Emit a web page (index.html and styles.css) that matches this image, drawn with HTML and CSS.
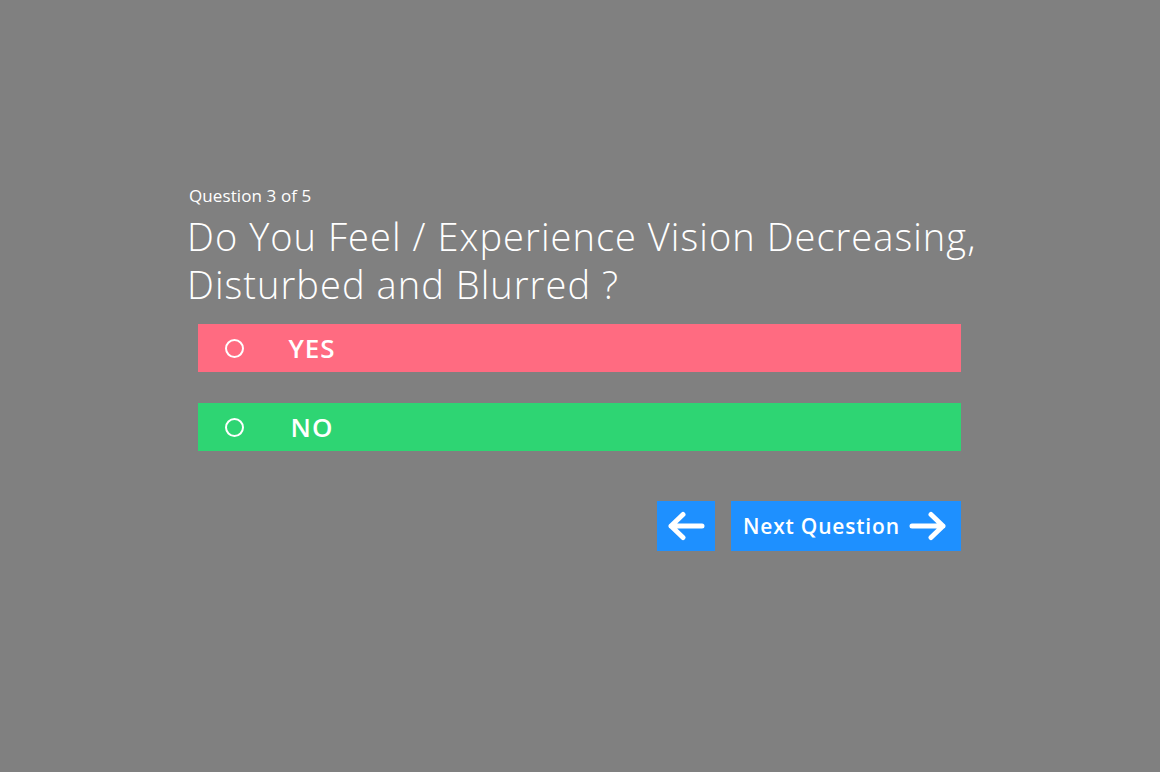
FILE: index.html
```html
<!DOCTYPE html>
<html>
<head>
<meta charset="utf-8">
<link rel="stylesheet" href="styles.css">
</head>
<body>
<main class="quiz">
  <div class="counter">Question 3 of 5</div>
  <h1 class="question">Do You Feel / Experience Vision Decreasing,<br>Disturbed and Blurred ?</h1>
  <div class="options">
    <label class="option yes"><span class="radio"></span><span class="label">YES</span></label>
    <label class="option no"><span class="radio"></span><span class="label">NO</span></label>
  </div>
  <div class="nav">
    <button class="btn back" aria-label="Previous">
      <svg width="38" height="30" viewBox="0 0 38 30"><path d="M35 15H4M16 3.5L4 15l12 11.5" fill="none" stroke="#fff" stroke-width="5" stroke-linecap="round" stroke-linejoin="round"/></svg>
    </button>
    <button class="btn next">
      <span>Next Question</span>
      <svg width="38" height="30" viewBox="0 0 38 30"><path d="M3 15h31M22 3.5L34 15 22 26.5" fill="none" stroke="#fff" stroke-width="5" stroke-linecap="round" stroke-linejoin="round"/></svg>
    </button>
  </div>
</main>
</body>
</html>
```
FILE: styles.css
```css
html, body {
  margin: 0;
  padding: 0;
  background: #808080;
  height: 100%;
}
body {
  font-family: "Open Sans", "Liberation Sans", sans-serif;
  color: #fff;
}
.quiz {
  width: 800px;
  margin-left: 187px;
  padding-top: 184px;
}
.counter {
  font-size: 17px;
  line-height: 24px;
  padding-left: 2px;
  letter-spacing: 0.1px;
}
.question {
  margin: 4px 0 0 0;
  font-weight: 300;
  font-size: 38px;
  line-height: 48px;
  letter-spacing: 1.05px;
}
.options {
  margin-top: 16px;
  margin-left: 11px;
  width: 763px;
  display: flex;
  flex-direction: column;
  gap: 31px;
}
.option {
  height: 48px;
  display: flex;
  align-items: center;
}
.option.yes { background: #ff6b81; }
.option.no { background: #2ed573; }
.radio {
  width: 15px;
  height: 15px;
  border: 2px solid #fff;
  border-radius: 50%;
  margin-left: 27px;
}
.label {
  width: 70px;
  margin-left: 33px;
  text-align: center;
  font-weight: 600;
  font-size: 26px;
  letter-spacing: 1px;
}
.nav {
  margin-top: 50px;
  width: 774px;
  display: flex;
  justify-content: flex-end;
  gap: 16px;
}
.btn {
  border: 0;
  background: #1e90ff;
  color: #fff;
  height: 50px;
  display: flex;
  align-items: center;
  padding: 0;
  font-family: inherit;
  cursor: pointer;
}
.btn.back {
  width: 58px;
  justify-content: center;
}
.btn.next {
  width: 230px;
  padding-left: 12px;
  gap: 9px;
  font-size: 21px;
  font-weight: 600;
  letter-spacing: 0.8px;
}
```
